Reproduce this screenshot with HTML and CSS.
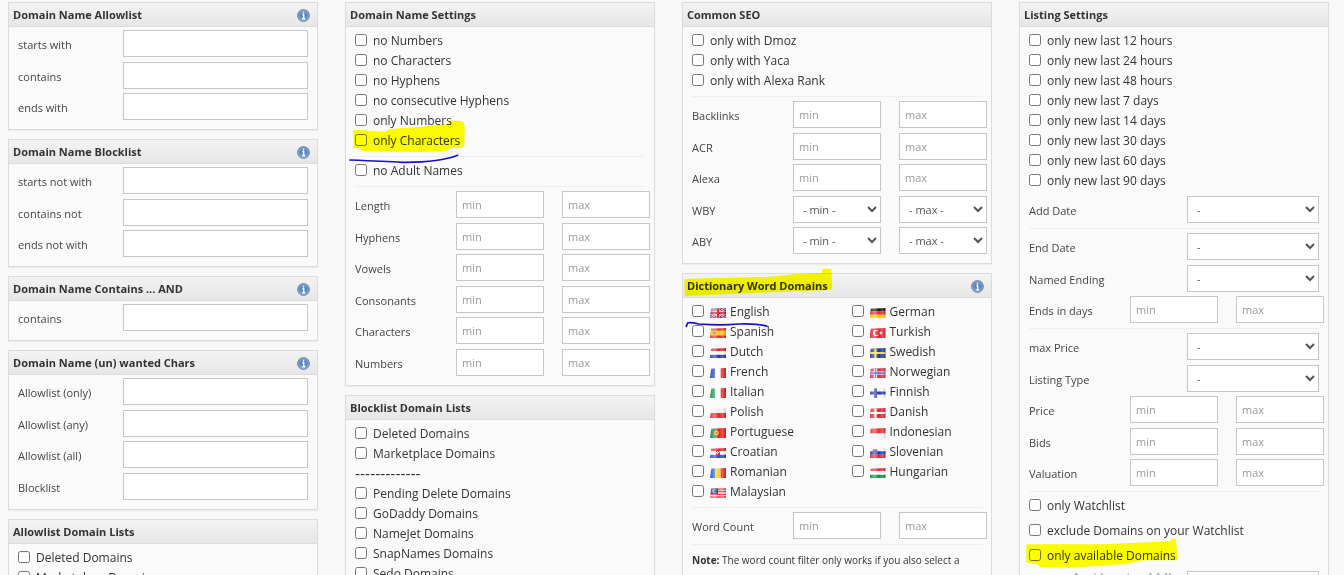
FILE: index.html
```html
<!DOCTYPE html>
<html lang="en">
<head>
<meta charset="utf-8">
<title>Domain filters</title>
<link rel="stylesheet" href="styles.css">
</head>
<body>
<svg class="defs" aria-hidden="true">
  <defs>
    <linearGradient id="shine" x1="0" y1="0" x2="1" y2="0">
      <stop offset="0" stop-color="#fff" stop-opacity=".1"/>
      <stop offset=".3" stop-color="#fff" stop-opacity=".4"/>
      <stop offset=".55" stop-color="#fff" stop-opacity="0"/>
      <stop offset=".8" stop-color="#fff" stop-opacity=".25"/>
      <stop offset="1" stop-color="#000" stop-opacity=".1"/>
    </linearGradient>
    <linearGradient id="ball" x1="0" y1="0" x2="0" y2="1">
      <stop offset="0" stop-color="#7391b5"/>
      <stop offset=".5" stop-color="#5585bd"/>
      <stop offset="1" stop-color="#7fb0e0"/>
    </linearGradient>
    <symbol id="info" viewBox="0 0 13 13">
      <circle cx="6.5" cy="6.5" r="5.9" fill="url(#ball)" stroke="#6f87a5"/>
      <circle cx="6.5" cy="6.5" r="4.8" fill="none" stroke="#8fb3dc" stroke-width=".8"/>
      <path d="M6.5 2.7v1.7M5.4 5.7h1.3v3.9M5.2 9.7h2.8" fill="none" stroke="#fff" stroke-width="1.4"/>
    </symbol>
    <symbol id="gloss" viewBox="0 0 16 10"><rect width="16" height="10" fill="url(#shine)"/></symbol>
  </defs>
</svg>

<main class="page">
  <div class="column">
    <section class="panel">
      <header class="panel-head"><h2>Domain Name Allowlist</h2><button class="info" aria-label="Info"><svg><use href="#info"/></svg></button></header>
      <div class="panel-body">
        <div class="fields">
          <div class="field"><label for="a1">starts with</label><input class="wide" id="a1"></div>
          <div class="field"><label for="a2">contains</label><input class="wide" id="a2"></div>
          <div class="field"><label for="a3">ends with</label><input class="wide" id="a3"></div>
        </div>
      </div>
    </section>
    <section class="panel">
      <header class="panel-head"><h2>Domain Name Blocklist</h2><button class="info" aria-label="Info"><svg><use href="#info"/></svg></button></header>
      <div class="panel-body">
        <div class="fields">
          <div class="field"><label for="b1">starts not with</label><input class="wide" id="b1"></div>
          <div class="field"><label for="b2">contains not</label><input class="wide" id="b2"></div>
          <div class="field"><label for="b3">ends not with</label><input class="wide" id="b3"></div>
        </div>
      </div>
    </section>
    <section class="panel">
      <header class="panel-head"><h2>Domain Name Contains ... AND</h2><button class="info" aria-label="Info"><svg><use href="#info"/></svg></button></header>
      <div class="panel-body">
        <div class="fields">
          <div class="field"><label for="c1">contains</label><input class="wide" id="c1"></div>
        </div>
      </div>
    </section>
    <section class="panel">
      <header class="panel-head"><h2>Domain Name (un) wanted Chars</h2><button class="info" aria-label="Info"><svg><use href="#info"/></svg></button></header>
      <div class="panel-body">
        <div class="fields">
          <div class="field"><label for="d1">Allowlist (only)</label><input class="wide" id="d1"></div>
          <div class="field"><label for="d2">Allowlist (any)</label><input class="wide" id="d2"></div>
          <div class="field"><label for="d3">Allowlist (all)</label><input class="wide" id="d3"></div>
          <div class="field"><label for="d4">Blocklist</label><input class="wide" id="d4"></div>
        </div>
      </div>
    </section>
    <section class="panel">
      <header class="panel-head"><h2>Allowlist Domain Lists</h2></header>
      <div class="panel-body">
        <div class="checks">
          <label class="check"><input type="checkbox">Deleted Domains</label>
          <label class="check"><input type="checkbox">Marketplace Domains</label>
        </div>
      </div>
    </section>
  </div>

  <div class="column">
    <section class="panel">
      <header class="panel-head"><h2>Domain Name Settings</h2></header>
      <div class="panel-body">
        <div class="checks">
          <label class="check"><input type="checkbox">no Numbers</label>
          <label class="check"><input type="checkbox">no Characters</label>
          <label class="check"><input type="checkbox">no Hyphens</label>
          <label class="check"><input type="checkbox">no consecutive Hyphens</label>
          <label class="check"><input type="checkbox">only Numbers</label>
          <label class="check"><input type="checkbox">only Characters
            <svg class="marker marker-characters" viewBox="40 355 351 141" aria-hidden="true">
              <path fill="#ff0" d="M53 390L80 392 150 396 160 388 250 382 330 374 346 362 378 365Q388 370 387 385L386 440Q380 448 350 445L330 454 250 457 80 455 72 446 53 444Z"/>
              <path fill="none" stroke="#1a10c8" stroke-width="5" stroke-linecap="round" d="M43 481Q150 485 200 488 310 489 366 467"/>
            </svg>
          </label>
        </div>
        <hr>
        <div class="checks-next">
          <label class="check"><input type="checkbox">no Adult Names</label>
        </div>
        <hr>
        <div class="fields">
          <div class="field pair"><label for="e1">Length</label><input id="e1" placeholder="min"><input aria-label="Length max" placeholder="max"></div>
          <div class="field pair"><label for="e2">Hyphens</label><input id="e2" placeholder="min"><input aria-label="Hyphens max" placeholder="max"></div>
          <div class="field pair"><label for="e3">Vowels</label><input id="e3" placeholder="min"><input aria-label="Vowels max" placeholder="max"></div>
          <div class="field pair"><label for="e4">Consonants</label><input id="e4" placeholder="min"><input aria-label="Consonants max" placeholder="max"></div>
          <div class="field pair"><label for="e5">Characters</label><input id="e5" placeholder="min"><input aria-label="Characters max" placeholder="max"></div>
          <div class="field pair"><label for="e6">Numbers</label><input id="e6" placeholder="min"><input aria-label="Numbers max" placeholder="max"></div>
        </div>
      </div>
    </section>
    <section class="panel">
      <header class="panel-head"><h2>Blocklist Domain Lists</h2></header>
      <div class="panel-body">
        <div class="checks">
          <label class="check"><input type="checkbox">Deleted Domains</label>
          <label class="check"><input type="checkbox">Marketplace Domains</label>
          <div class="check divider">-------------</div>
          <label class="check"><input type="checkbox">Pending Delete Domains</label>
          <label class="check"><input type="checkbox">GoDaddy Domains</label>
          <label class="check"><input type="checkbox">NameJet Domains</label>
          <label class="check"><input type="checkbox">SnapNames Domains</label>
          <label class="check"><input type="checkbox">Sedo Domains</label>
        </div>
      </div>
    </section>
  </div>

  <div class="column">
    <section class="panel">
      <header class="panel-head"><h2>Common SEO</h2></header>
      <div class="panel-body">
        <div class="checks">
          <label class="check"><input type="checkbox">only with Dmoz</label>
          <label class="check"><input type="checkbox">only with Yaca</label>
          <label class="check"><input type="checkbox">only with Alexa Rank</label>
        </div>
        <hr>
        <div class="fields">
          <div class="field pair"><label for="f1">Backlinks</label><input id="f1" placeholder="min"><input aria-label="Backlinks max" placeholder="max"></div>
          <div class="field pair"><label for="f2">ACR</label><input id="f2" placeholder="min"><input aria-label="ACR max" placeholder="max"></div>
          <div class="field pair"><label for="f3">Alexa</label><input id="f3" placeholder="min"><input aria-label="Alexa max" placeholder="max"></div>
          <div class="field pair"><label for="f4">WBY</label><select id="f4"><option>- min -</option></select><select aria-label="WBY max"><option>- max -</option></select></div>
          <div class="field pair"><label for="f5">ABY</label><select id="f5"><option>- min -</option></select><select aria-label="ABY max"><option>- max -</option></select></div>
        </div>
      </div>
    </section>
    <section class="panel">
      <header class="panel-head"><h2>Dictionary Word Domains</h2><button class="info" aria-label="Info"><svg><use href="#info"/></svg></button>
        <svg class="marker marker-title" viewBox="30 6 456 90" aria-hidden="true"><path fill="#ff0" d="M37 45Q36 42 60 41L300 35 370 27 450 24V12Q462 8 478 13L481 73Q470 77 420 77L330 80 150 88Q90 93 38 92Z"/></svg>
      </header>
      <div class="panel-body">
        <div class="languages">
          <div class="checks">
            <label class="check"><input type="checkbox"><svg class="flag" viewBox="0 0 16 10"><path fill="#2b3f8f" d="M0 0h16v10H0z"/><path stroke="#fff" stroke-width="2.2" d="M0 0l16 10M16 0L0 10"/><path stroke="#d8202c" stroke-width="1.2" d="M0 0l16 10M16 0L0 10"/><path stroke="#fff" stroke-width="3" d="M8 0v10M0 5h16"/><path stroke="#d8202c" stroke-width="2" d="M8 0v10M0 5h16"/><use href="#gloss"/></svg>English
              <svg class="marker marker-english" viewBox="39 165 252 27" aria-hidden="true"><path fill="none" stroke="#1a10c8" stroke-width="5" stroke-linecap="round" d="M43 184L47 174Q55 171 80 177 150 182 200 177 260 175 285 184"/></svg>
            </label>
            <label class="check"><input type="checkbox"><svg class="flag" viewBox="0 0 16 10"><path fill="#e02a20" d="M0 0h16v10H0z"/><path fill="#fcc418" d="M0 2.5h16v5H0z"/><path fill="#c8651c" d="M3 3.5h3v3H3z"/><use href="#gloss"/></svg>Spanish</label>
            <label class="check"><input type="checkbox"><svg class="flag" viewBox="0 0 16 10"><path fill="#d8202c" d="M0 0h16v3.3H0z"/><path fill="#fff" d="M0 3.3h16v3.4H0z"/><path fill="#2138a0" d="M0 6.7h16V10H0z"/><use href="#gloss"/></svg>Dutch</label>
            <label class="check"><input type="checkbox"><svg class="flag" viewBox="0 0 16 10"><path fill="#2138b0" d="M0 0h5.3v10H0z"/><path fill="#fff" d="M5.3 0h5.4v10H5.3z"/><path fill="#e32028" d="M10.7 0H16v10h-5.3z"/><use href="#gloss"/></svg>French</label>
            <label class="check"><input type="checkbox"><svg class="flag" viewBox="0 0 16 10"><path fill="#0a9040" d="M0 0h5.3v10H0z"/><path fill="#fff" d="M5.3 0h5.4v10H5.3z"/><path fill="#e32028" d="M10.7 0H16v10h-5.3z"/><use href="#gloss"/></svg>Italian</label>
            <label class="check"><input type="checkbox"><svg class="flag" viewBox="0 0 16 10"><path fill="#f0eded" d="M0 0h16v5H0z"/><path fill="#e0282c" d="M0 5h16v5H0z"/><use href="#gloss"/></svg>Polish</label>
            <label class="check"><input type="checkbox"><svg class="flag" viewBox="0 0 16 10"><path fill="#14803a" d="M0 0h6.5v10H0z"/><path fill="#e8201c" d="M6.5 0H16v10H6.5z"/><circle cx="6.5" cy="5" r="2.3" fill="#f4d030"/><circle cx="6.5" cy="5" r="1" fill="#d8302c"/><use href="#gloss"/></svg>Portuguese</label>
            <label class="check"><input type="checkbox"><svg class="flag" viewBox="0 0 16 10"><path fill="#e0282c" d="M0 0h16v3.3H0z"/><path fill="#fff" d="M0 3.3h16v3.4H0z"/><path fill="#1c48c0" d="M0 6.7h16V10H0z"/><path fill="#e0282c" d="M6 2h4v5H6z"/><path fill="#fff" d="M7 3h1v1H7zM9 3h1v1H9zM6 4h1v1H6zM8 4h1v1H8zM7 5h1v1H7z"/><use href="#gloss"/></svg>Croatian</label>
            <label class="check"><input type="checkbox"><svg class="flag" viewBox="0 0 16 10"><path fill="#1c54c8" d="M0 0h5.3v10H0z"/><path fill="#fcd424" d="M5.3 0h5.4v10H5.3z"/><path fill="#e02a20" d="M10.7 0H16v10h-5.3z"/><use href="#gloss"/></svg>Romanian</label>
            <label class="check"><input type="checkbox"><svg class="flag" viewBox="0 0 16 10"><path fill="#fff" d="M0 0h16v10H0z"/><path stroke="#dc2c34" stroke-width="1.4" d="M0 1h16M0 3.5h16M0 6.5h16M0 9h16"/><path fill="#2a2f88" d="M0 0h8v6H0z"/><circle cx="4" cy="3" r="1.8" fill="#f4d060"/><circle cx="4.7" cy="3" r="1.3" fill="#2a2f88"/><use href="#gloss"/></svg>Malaysian</label>
          </div>
          <div class="checks">
            <label class="check"><input type="checkbox"><svg class="flag" viewBox="0 0 16 10"><path fill="#151010" d="M0 0h16v3.5H0z"/><path fill="#e02818" d="M0 3.5h16v3.2H0z"/><path fill="#fcc020" d="M0 6.7h16V10H0z"/><use href="#gloss"/></svg>German</label>
            <label class="check"><input type="checkbox"><svg class="flag" viewBox="0 0 16 10"><path fill="#e4202a" d="M0 0h16v10H0z"/><circle cx="6" cy="5" r="3" fill="#fff"/><circle cx="7" cy="5" r="2.3" fill="#e4202a"/><path fill="#fff" d="M9 5l1.2-.5.1-1.3.8 1 1.2-.4-.7 1.2.7 1.1-1.2-.3-.8 1-.1-1.300z"/><use href="#gloss"/></svg>Turkish</label>
            <label class="check"><input type="checkbox"><svg class="flag" viewBox="0 0 16 10"><path fill="#1c3a94" d="M0 0h16v10H0z"/><path stroke="#f8d834" stroke-width="2" d="M5.5 0v10M0 5h16"/><use href="#gloss"/></svg>Swedish</label>
            <label class="check"><input type="checkbox"><svg class="flag" viewBox="0 0 16 10"><path fill="#e0283c" d="M0 0h16v10H0z"/><path stroke="#fff" stroke-width="3.2" d="M5.5 0v10M0 5h16"/><path stroke="#3450b0" stroke-width="1.5" d="M5.5 0v10M0 5h16"/><use href="#gloss"/></svg>Norwegian</label>
            <label class="check"><input type="checkbox"><svg class="flag" viewBox="0 0 16 10"><path fill="#f4f4fa" d="M0 0h16v10H0z"/><path stroke="#2430a8" stroke-width="2.8" d="M5.5 0v10M0 5h16"/><use href="#gloss"/></svg>Finnish</label>
            <label class="check"><input type="checkbox"><svg class="flag" viewBox="0 0 16 10"><path fill="#dc2430" d="M0 0h16v10H0z"/><path stroke="#fff" stroke-width="1.9" d="M5.5 0v10M0 5h16"/><use href="#gloss"/></svg>Danish</label>
            <label class="check"><input type="checkbox"><svg class="flag" viewBox="0 0 16 10"><path fill="#e42c2c" d="M0 0h16v5.5H0z"/><path fill="#f4f1f1" d="M0 5.5h16V10H0z"/><use href="#gloss"/></svg>Indonesian</label>
            <label class="check"><input type="checkbox"><svg class="flag" viewBox="0 0 16 10"><path fill="#f4f4f8" d="M0 0h16v3.3H0z"/><path fill="#2030a0" d="M0 3.3h16v3.4H0z"/><path fill="#dc2430" d="M0 6.7h16V10H0z"/><path fill="#2448b0" stroke="#c8404c" stroke-width=".5" d="M3 1.5h4V5L5 6.8 3 5z"/><use href="#gloss"/></svg>Slovenian</label>
            <label class="check"><input type="checkbox"><svg class="flag" viewBox="0 0 16 10"><path fill="#e0282c" d="M0 0h16v3.3H0z"/><path fill="#fff" d="M0 3.3h16v3.4H0z"/><path fill="#148848" d="M0 6.7h16V10H0z"/><use href="#gloss"/></svg>Hungarian</label>
          </div>
        </div>
        <hr>
        <div class="fields">
          <div class="field pair"><label for="g1">Word Count</label><input id="g1" placeholder="min"><input aria-label="Word Count max" placeholder="max"></div>
        </div>
        <hr>
        <p class="note"><strong>Note:</strong> The word count filter only works if you also select a</p>
      </div>
    </section>
  </div>

  <div class="column">
    <section class="panel">
      <header class="panel-head"><h2>Listing Settings</h2></header>
      <div class="panel-body">
        <div class="checks">
          <label class="check"><input type="checkbox">only new last 12 hours</label>
          <label class="check"><input type="checkbox">only new last 24 hours</label>
          <label class="check"><input type="checkbox">only new last 48 hours</label>
          <label class="check"><input type="checkbox">only new last 7 days</label>
          <label class="check"><input type="checkbox">only new last 14 days</label>
          <label class="check"><input type="checkbox">only new last 30 days</label>
          <label class="check"><input type="checkbox">only new last 60 days</label>
          <label class="check"><input type="checkbox">only new last 90 days</label>
        </div>
        <div class="fields fields-after">
          <div class="field single"><label for="h1">Add Date</label><select id="h1"><option>-</option></select></div>
        </div>
        <hr>
        <div class="fields">
          <div class="field single"><label for="h2">End Date</label><select id="h2"><option>-</option></select></div>
          <div class="field single"><label for="h3">Named Ending</label><select id="h3"><option>-</option></select></div>
          <div class="field pair"><label for="h4">Ends in days</label><input id="h4" placeholder="min"><input aria-label="Ends in days max" placeholder="max"></div>
        </div>
        <hr>
        <div class="fields">
          <div class="field single"><label for="i1">max Price</label><select id="i1"><option>-</option></select></div>
          <div class="field single"><label for="i2">Listing Type</label><select id="i2"><option>-</option></select></div>
          <div class="field pair"><label for="i3">Price</label><input id="i3" placeholder="min"><input aria-label="Price max" placeholder="max"></div>
          <div class="field pair"><label for="i4">Bids</label><input id="i4" placeholder="min"><input aria-label="Bids max" placeholder="max"></div>
          <div class="field pair"><label for="i5">Valuation</label><input id="i5" placeholder="min"><input aria-label="Valuation max" placeholder="max"></div>
        </div>
        <hr>
        <div class="checks-next spaced">
          <label class="check"><input type="checkbox">only Watchlist</label>
          <label class="check"><input type="checkbox">exclude Domains on your Watchlist</label>
          <label class="check"><input type="checkbox">only available Domains
            <svg class="marker marker-available" viewBox="63 756 462 96" aria-hidden="true"><path fill="#ff0" d="M67 778H300L430 772 500 768 502 760 516 762 521 826H420L360 838 200 848 110 846 100 838 67 832Z"/></svg>
          </label>
        </div>
        <div class="field single"><span class="watermark">Activate Windows</span><select aria-label="Status"><option>-</option></select></div>
      </div>
    </section>
  </div>
</main>
</body>
</html>
```
FILE: styles.css
```css
* { box-sizing: border-box; }

body {
  margin: 0;
  background: #f8f8f8;
  color: #333;
  font-family: "Open Sans", "Noto Sans", sans-serif;
  font-size: 12px;
}

.defs { position: absolute; width: 0; height: 0; }

.page {
  display: grid;
  grid-template-columns: repeat(4, minmax(0, 1fr));
  gap: 27px;
  height: 100vh;
  padding: 2px 15px 0 8px;
  overflow: hidden;
}

.column { display: flex; flex-direction: column; gap: 9px; }

.panel {
  flex: none;
  border: 1px solid #dcdcdc;
  background: #fafafa;
  box-shadow: 0 1px 1px #ececec;
}

.panel-head {
  position: relative;
  display: flex;
  align-items: center;
  justify-content: space-between;
  height: 24px;
  padding: 0 7px 0 4px;
  border-bottom: 1px solid #dcdcdc;
  background: linear-gradient(#f4f3f4, #e7e6e7);
}

h2 { margin: 0; font-size: 11px; font-weight: 700; line-height: 15px; padding-bottom: 1px; }

.info {
  width: 13px;
  height: 13px;
  margin-top: 2px;
  padding: 0;
  border: 0;
  background: none;
}

.info svg { display: block; width: 13px; height: 13px; }

.panel-body { padding: 3px 9px 9px; }

.field { display: flex; justify-content: space-between; height: 27px; margin-bottom: 4px; }
.field:nth-child(odd) { margin-bottom: 5px; }
.fields .field:last-child { margin-bottom: 0; }
.field label { flex: 1; padding-top: 3px; color: #444; font-size: 11px; line-height: 24px; }

.field input,
.field select {
  height: 27px;
  border: 1px solid #c6c6c6;
  border-radius: 0;
  background: #fff;
  color: #555;
  font: 11px "Open Sans", "Noto Sans", sans-serif;
}

.field input { width: 88px; padding: 0 5px; }
.field input.wide { width: 185px; }
.field input::placeholder { color: #999; }
.field select { width: 88px; padding: 0 0 0 5px; }
.field.pair { gap: 18px; margin-right: -5px; }
.field.single select { width: 132px; }

.fields-after { margin-top: 5px; }

hr { height: 1px; margin: 5px 0 4px; border: 0; background: #efefef; }

.checks { padding-top: 1px; }

.check {
  position: relative;
  display: flex;
  align-items: center;
  height: 20px;
  line-height: 20px;
}

.check input { width: 12px; height: 12px; margin: 0 6px 2px 0; }
.spaced .check { margin-bottom: 5px; }
.divider { font-family: "DejaVu Sans", sans-serif; font-size: 14px; }

.languages { display: grid; grid-template-columns: 11fr 9fr; }

.flag {
  width: 16px;
  height: 10px;
  margin: 2px 4px 0 0;
  clip-path: polygon(8% 8%, 100% 0, 100% 100%, 0 100%);
}

.note { margin: 5px 0 20px; font-size: 10px; line-height: 20px; }

.marker { position: absolute; z-index: 1; mix-blend-mode: multiply; pointer-events: none; }
.marker-characters { left: -6px; top: -13px; width: 117px; height: 47px; }
.marker-title { left: -1px; top: -7px; width: 152px; height: 30px; }
.marker-english { left: -7px; top: 18px; width: 84px; height: 9px; }
.marker-available { left: -4px; top: -9px; width: 154px; height: 32px; }

.watermark {
  flex: 1;
  padding-left: 41px;
  overflow: hidden;
  color: #a8a8a8;
  font-size: 20px;
  line-height: 18px;
  white-space: nowrap;
}
```
